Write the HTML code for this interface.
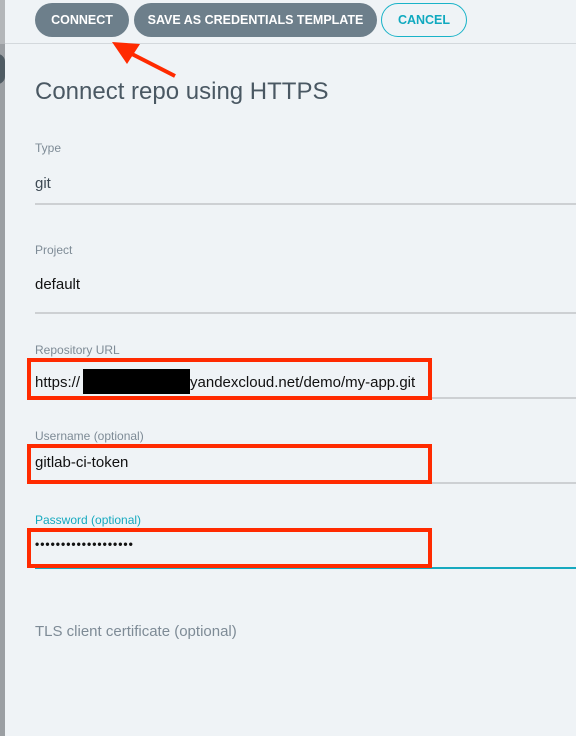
<!DOCTYPE html>
<html><head><meta charset="utf-8"><style>
*{margin:0;padding:0;box-sizing:border-box}
body{width:576px;height:736px;background:#eff3f6;font-family:"Liberation Sans",sans-serif;position:relative;overflow:hidden}
.a{position:absolute;white-space:nowrap}
.btn{position:absolute;top:3px;height:34px;border-radius:17px;background:#6d7f8b;color:#fff;font-size:12.5px;font-weight:bold;line-height:34px;text-align:center}
.lbl{font-size:12px;color:#7e8b96}
.val{font-size:15px;color:#111}
.line{position:absolute;left:35px;right:0;height:2px;background:#cdd0d3}
.red{position:absolute;left:27px;width:405px;border:4px solid #ff2a00}
</style></head><body>
<div class="a" style="left:0;top:0;width:5px;height:736px;background:#9b9fa3"></div>
<div class="a" style="left:0;top:0;width:5px;height:44px;background:#b3b6b9"></div>
<div class="a" style="left:-10px;top:54px;width:15px;height:30px;border-radius:15px;background:#4f5b63"></div>
<div class="a" style="left:5px;top:43px;right:0;height:1px;background:#d3d8dc"></div>
<div class="btn" style="left:35px;width:94px">CONNECT</div>
<div class="btn" style="left:134px;width:243px">SAVE AS CREDENTIALS TEMPLATE</div>
<div class="btn" style="left:381px;width:86px;background:transparent;border:1px solid #19b3c8;color:#0fa9bf;line-height:32px">CANCEL</div>
<svg class="a" style="left:0;top:0" width="200" height="90"><line x1="175" y1="76" x2="128" y2="52" stroke="#ff2a00" stroke-width="4"/><polygon points="112,42 140,44 127,64" fill="#ff2a00"/></svg>
<div class="a" style="left:35px;top:78px;font-size:24px;color:#4a5863">Connect repo using HTTPS</div>
<div class="a lbl" style="left:35px;top:141px">Type</div>
<div class="a val" style="left:35px;top:175px;color:#3e4a54">git</div>
<div class="line" style="top:203px"></div>
<div class="a lbl" style="left:35px;top:243px">Project</div>
<div class="a val" style="left:35px;top:276px">default</div>
<div class="line" style="top:312px"></div>
<div class="a lbl" style="left:35px;top:343px">Repository URL</div>
<div class="line" style="top:397px"></div>
<div class="red" style="top:358px;height:42px"></div>
<div class="a val" style="left:35px;top:369px">https://<span style="display:inline-block;width:107px;height:25px;background:#000;vertical-align:-7px;margin-left:3px"></span>yandexcloud.net/demo/my-app.git</div>
<div class="a lbl" style="left:35px;top:429px">Username (optional)</div>
<div class="line" style="top:482px"></div>
<div class="red" style="top:444px;height:40px"></div>
<div class="a val" style="left:35px;top:454px">gitlab-ci-token</div>
<div class="a lbl" style="left:35px;top:513px;color:#16a9bf">Password (optional)</div>
<div class="line" style="top:567px;background:#17a9bf"></div>
<div class="red" style="top:528px;height:40px"></div>
<div class="a" style="left:35px;top:537px;font-size:12px;color:#111;letter-spacing:1px;font-weight:bold">•••••••••••••••••••</div>
<div class="a" style="left:35px;top:623px;font-size:15px;color:#7e8b96">TLS client certificate (optional)</div>
</body></html>
